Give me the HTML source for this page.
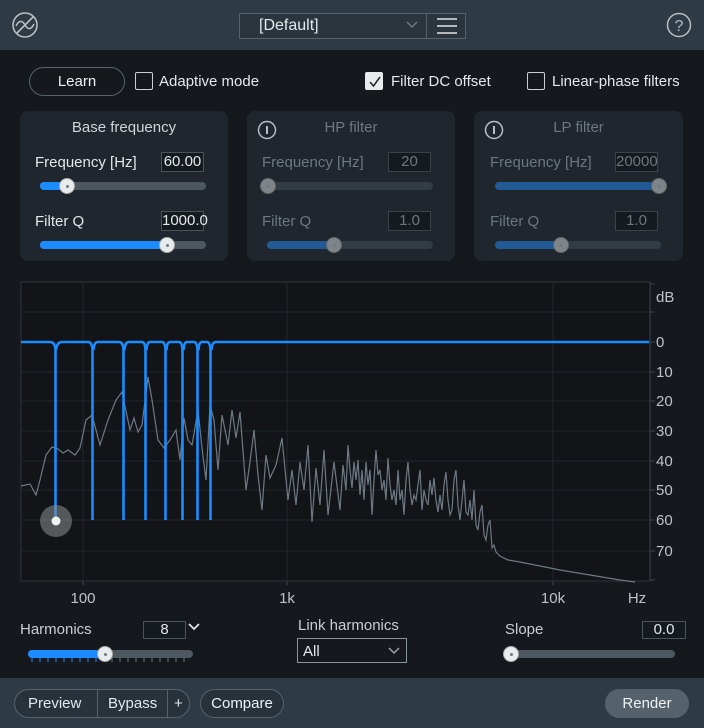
<!DOCTYPE html>
<html><head><meta charset="utf-8"><style>
*{box-sizing:border-box;margin:0;padding:0}
body{width:704px;height:728px;background:#15191d;font-family:"Liberation Sans",sans-serif;color:#e4e8eb;position:relative;overflow:hidden;font-size:15px}
.a{position:absolute}
.hdr{left:0;top:0;width:704px;height:50px;background:#2e3a44}
.ftr{left:0;top:678px;width:704px;height:50px;background:#2e3a44}
.panel{background:#1f262d;border-radius:8px}
.cb{width:18px;height:18px;border:1.5px solid #c9ced2;border-radius:2px}
.lbl{font-size:15px;color:#e4e8eb;white-space:nowrap;padding-top:1px}
.dim{color:#6c7780}
.box{border:1px solid #4a545c;background:#151a1f;font-size:15px;text-align:center;line-height:18px;height:20px}
.track{height:8px;border-radius:4px;background:#4c575f}
.knob{width:16px;height:16px;border-radius:50%;background:#e9ecee;border:1px solid #aaa}
.knob:after{content:"";position:absolute;left:6px;top:6px;width:3px;height:3px;border-radius:50%;background:#777}
.btn{border:1px solid #56626b;border-radius:15px;height:30px;line-height:28px;text-align:center;font-size:15px;color:#eef1f3}
</style></head><body>
<div class="a hdr"></div>
<svg class="a" style="left:11px;top:11px" width="28" height="28" viewBox="0 0 28 28"><circle cx="14" cy="14" r="12" fill="none" stroke="#b7bec4" stroke-width="1.6"/><path d="M6 22 L22 6" stroke="#b7bec4" stroke-width="1.6"/><path d="M5 15 C8 9 11 9 14 14 C17 19 20 19 23 13" fill="none" stroke="#b7bec4" stroke-width="1.6"/></svg>
<div class="a" style="left:239px;top:13px;width:227px;height:26px;border:1px solid #56626b;background:#2a353e"></div>
<div class="a" style="left:426px;top:13px;width:1px;height:26px;background:#56626b"></div>
<div class="a lbl" style="left:259px;top:16px;font-size:16px">[Default]</div>
<svg class="a" style="left:406px;top:21px" width="12" height="8"><path d="M1 1 L6 6 L11 1" fill="none" stroke="#6f7a83" stroke-width="1.5"/></svg>
<svg class="a" style="left:437px;top:17px" width="20" height="18"><path d="M0 2H20M0 9H20M0 16H20" stroke="#dfe3e6" stroke-width="1.6"/></svg>
<svg class="a" style="left:666px;top:12px" width="26" height="26"><circle cx="13" cy="13" r="11.5" fill="none" stroke="#b7bec4" stroke-width="1.5"/><text x="13" y="19" text-anchor="middle" font-size="16" fill="#b7bec4" font-family="Liberation Sans">?</text></svg>

<div class="a btn" style="left:29px;top:67px;width:96px;height:29px;background:#15191d">Learn</div>
<div class="a cb" style="left:135px;top:72px"></div>
<div class="a lbl" style="left:159px;top:72px">Adaptive mode</div>
<div class="a cb" style="left:365px;top:72px;background:#e9ecee;border-color:#e9ecee"></div>
<svg class="a" style="left:368px;top:75px" width="14" height="13"><path d="M2 7 L5.5 11 L12 2" fill="none" stroke="#222" stroke-width="1.5"/></svg>
<div class="a lbl" style="left:391px;top:72px">Filter DC offset</div>
<div class="a cb" style="left:527px;top:72px"></div>
<div class="a lbl" style="left:552px;top:72px">Linear-phase filters</div>

<div class="a panel" style="left:20px;top:111px;width:208px;height:150px"></div>
<div class="a panel" style="left:247px;top:111px;width:208px;height:150px"></div>
<div class="a panel" style="left:474px;top:111px;width:209px;height:150px"></div>

<div class="a lbl" style="left:20px;width:208px;text-align:center;top:118px;color:#cfd5d9">Base frequency</div>
<div class="a lbl" style="left:35px;top:153px">Frequency [Hz]</div>
<div class="a box" style="left:161px;top:152px;width:43px">60.00</div>
<div class="a track" style="left:40px;top:182px;width:166px"></div>
<div class="a track" style="left:40px;top:182px;width:28px;background:#1a8cff"></div>
<div class="a knob" style="left:59px;top:178px"></div>
<div class="a lbl" style="left:35px;top:212px">Filter Q</div>
<div class="a box" style="left:161px;top:211px;width:43px">1000.0</div>
<div class="a track" style="left:40px;top:241px;width:166px"></div>
<div class="a track" style="left:40px;top:241px;width:128px;background:#1a8cff"></div>
<div class="a knob" style="left:159px;top:237px"></div>

<svg class="a" style="left:257px;top:120px" width="20" height="20"><circle cx="10" cy="10" r="8.5" fill="none" stroke="#b7bec4" stroke-width="1.5"/><path d="M10 6V14" stroke="#b7bec4" stroke-width="2"/></svg>
<div class="a lbl dim" style="left:247px;width:208px;text-align:center;top:118px">HP filter</div>
<div class="a lbl dim" style="left:262px;top:153px">Frequency [Hz]</div>
<div class="a box dim" style="left:388px;top:152px;width:43px;border-color:#3a434a">20</div>
<div class="a track" style="left:267px;top:182px;width:166px;background:#323c44"></div>
<div class="a knob" style="left:260px;top:178px;background:#7d858b;border-color:#666"></div>
<div class="a lbl dim" style="left:262px;top:212px">Filter Q</div>
<div class="a box dim" style="left:388px;top:211px;width:43px;border-color:#3a434a">1.0</div>
<div class="a track" style="left:267px;top:241px;width:166px;background:#323c44"></div>
<div class="a track" style="left:267px;top:241px;width:66px;background:#225a95"></div>
<div class="a knob" style="left:326px;top:237px;background:#7d858b;border-color:#666"></div>

<svg class="a" style="left:484px;top:120px" width="20" height="20"><circle cx="10" cy="10" r="8.5" fill="none" stroke="#b7bec4" stroke-width="1.5"/><path d="M10 6V14" stroke="#b7bec4" stroke-width="2"/></svg>
<div class="a lbl dim" style="left:474px;width:209px;text-align:center;top:118px">LP filter</div>
<div class="a lbl dim" style="left:490px;top:153px">Frequency [Hz]</div>
<div class="a box dim" style="left:615px;top:152px;width:43px;border-color:#3a434a">20000</div>
<div class="a track" style="left:495px;top:182px;width:166px;background:#225a95"></div>
<div class="a knob" style="left:651px;top:178px;background:#7d858b;border-color:#666"></div>
<div class="a lbl dim" style="left:490px;top:212px">Filter Q</div>
<div class="a box dim" style="left:615px;top:211px;width:43px;border-color:#3a434a">1.0</div>
<div class="a track" style="left:495px;top:241px;width:166px;background:#323c44"></div>
<div class="a track" style="left:495px;top:241px;width:66px;background:#225a95"></div>
<div class="a knob" style="left:553px;top:237px;background:#7d858b;border-color:#666"></div>

<svg class="a" style="left:0;top:270px" width="704" height="340" viewBox="0 270 704 340">
<rect x="21" y="282" width="629" height="299" fill="#121418" stroke="#2c343b"/>
<g stroke="#21272d" stroke-width="1">
<path d="M21 312H650M21 342H650M21 372H650M21 401H650M21 431H650M21 461H650M21 490H650M21 520H650M21 551H650"/>
<path d="M83 282V581M287 282V581M553 282V581"/>
</g>
<path d="M650 282V581" stroke="#3c454c"/>
<g stroke="#3c454c"><path d="M650 284h5M650 312h5M650 342h5M650 372h5M650 401h5M650 431h5M650 461h5M650 490h5M650 520h5M650 551h5M650 580h5M83 581v4M287 581v4M553 581v4"/></g>
<g font-family="Liberation Sans" font-size="15" fill="#bcc3c8">
<text x="656" y="302">dB</text><text x="656" y="347">0</text><text x="656" y="377">10</text><text x="656" y="406">20</text><text x="656" y="436">30</text><text x="656" y="466">40</text><text x="656" y="495">50</text><text x="656" y="525">60</text><text x="656" y="556">70</text>
<text x="83" y="603" text-anchor="middle">100</text><text x="287" y="603" text-anchor="middle">1k</text><text x="553" y="603" text-anchor="middle">10k</text><text x="637" y="603" text-anchor="middle">Hz</text>
</g>
<polyline fill="none" stroke="#6d7983" stroke-width="1.2" points="21,486 30,484 36,495 40,480 46,455 52,447 58,449 63,453 68,450 75,455 80,448 86,420 92,415 100,445 108,420 116,400 122,392 130,430 134,418 138,432 142,425 148,377 152,400 158,440 164,448 170,440 176,430 180,460 184,418 188,440 192,445 198,410 202,448 206,480 210,405 214,420 218,470 222,415 228,445 232,410 236,438 240,412 246,490 250,462 254,430 258,475 262,510 266,455 270,478 276,465 282,438 288,500 292,470 296,505 300,462 304,490 308,445 312,522 316,468 320,505 324,450 328,515 334,462 340,510 343,465 346,490 348,445 350,470 352,488 354,462 356,480 358,460 360,495 362,470 364,500 366,462 368,485 370,470 372,515 374,480 376,450 378,475 380,470 382,490 384,480 386,500 388,458 390,485 392,500 394,490 396,505 398,470 400,500 402,490 404,515 406,480 408,462 410,490 412,505 414,495 416,500 418,485 420,470 422,510 424,490 426,500 428,505 430,480 432,495 434,478 436,500 438,512 440,495 442,510 444,485 446,472 448,500 450,515 452,510 454,480 456,470 458,505 460,520 462,500 464,480 466,512 468,515 470,500 472,520 474,490 476,525 478,530 480,512 482,505 484,535 486,540 488,525 490,520 492,548 494,545 496,552 500,556 508,560 520,562 540,566 560,570 590,575 620,580 635,582"/>
<path d="M21 342H50 Q55 342 55.5 350 V520 M56 350 Q57 342 62 342 H88 Q92 342 92.5 350 V520 M93.5 350 Q94 342 98 342 H119 Q123 342 123.5 350 V520 M124.5 350 Q125 342 129 342 H142 Q145 342 145.5 350 V520 M146.5 350 Q147 342 150 342 H162 Q165 342 165.5 350 V520 M166.5 350 Q167 342 170 342 H179 Q182 342 182.5 350 V520 M183.5 350 Q184 342 187 342 H194 Q197 342 197.5 350 V520 M198.5 350 Q199 342 202 342 H207 Q210 342 210.5 350 V520 M211.5 350 Q212 342 216 342 H649" fill="none" stroke="#1a8cff" stroke-width="2.6"/>
<circle cx="56" cy="521" r="16" fill="#8a8f93" opacity="0.55"/>
<circle cx="56" cy="521" r="4.5" fill="#f2f2f2"/>
</svg>

<div class="a lbl" style="left:20px;top:620px;color:#c8ced2">Harmonics</div>
<div class="a box" style="left:143px;top:621px;width:43px;height:18px;line-height:16px">8</div>
<svg class="a" style="left:188px;top:623px" width="12" height="8"><path d="M1 1 L6 6 L11 1" fill="none" stroke="#dfe3e6" stroke-width="1.8"/></svg>
<div class="a track" style="left:28px;top:650px;width:165px"></div>
<div class="a track" style="left:28px;top:650px;width:78px;background:#1a8cff"></div>
<svg class="a" style="left:30px;top:657px" width="165" height="6"><g stroke="#1a8cff"><path d="M2 0v5M10 0v5M18 0v5M26 0v5M34 0v5M42 0v5M50 0v5M58 0v5M66 0v5"/></g><g stroke="#66717a"><path d="M82 0v5M90 0v5M98 0v5M106 0v5M114 0v5M122 0v5M130 0v5M138 0v5M146 0v5M154 0v5"/></g></svg>
<div class="a knob" style="left:97px;top:646px"></div>
<div class="a lbl" style="left:298px;top:616px;color:#c8ced2">Link harmonics</div>
<div class="a" style="left:297px;top:638px;width:110px;height:25px;border:1px solid #8a949b;background:#15191d"></div>
<div class="a lbl" style="left:303px;top:642px">All</div>
<svg class="a" style="left:388px;top:647px" width="12" height="8"><path d="M1 1 L6 6 L11 1" fill="none" stroke="#9aa3a9" stroke-width="1.5"/></svg>
<div class="a lbl" style="left:505px;top:620px;color:#c8ced2">Slope</div>
<div class="a box" style="left:642px;top:621px;width:44px;height:18px;line-height:16px">0.0</div>
<div class="a track" style="left:504px;top:650px;width:171px"></div>
<div class="a knob" style="left:503px;top:646px"></div>

<div class="a ftr"></div>
<div class="a btn" style="left:14px;top:689px;width:176px;height:29px;background:#27323b"></div>
<div class="a" style="left:97px;top:689px;width:1px;height:29px;background:#56626b"></div>
<div class="a" style="left:167px;top:689px;width:1px;height:29px;background:#56626b"></div>
<div class="a lbl" style="left:28px;top:694px">Preview</div>
<div class="a lbl" style="left:108px;top:694px">Bypass</div>
<div class="a lbl" style="left:174px;top:694px">+</div>
<div class="a btn" style="left:200px;top:689px;width:84px;height:29px;background:#27323b">Compare</div>
<div class="a btn" style="left:605px;top:689px;width:84px;height:29px;background:#56626b;border-color:#56626b">Render</div>
</body></html>
